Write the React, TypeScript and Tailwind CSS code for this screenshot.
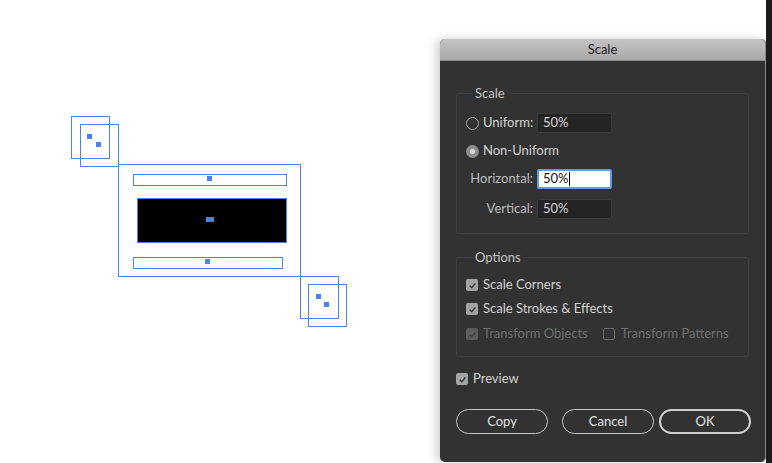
import React from 'react';

const BLUE = '#4d80ff';

const Canvas = () => (
  <svg width={440} height={463} className="block" shapeRendering="crispEdges">
    <g fill="none" stroke={BLUE} strokeWidth={1}>
      <rect x={71.5} y={116.5} width={38} height={42} />
      <rect x={80.5} y={124.5} width={38} height={42} />
      <rect x={118.5} y={164.5} width={182} height={112} />
      <rect x={133.5} y={174.5} width={153} height={11} />
      <rect x={137.5} y={198.5} width={149} height={44} fill="#000" />
      <rect x={133.5} y={257.5} width={149} height={11} />
      <rect x={300.5} y={276.5} width={38} height={42} />
      <rect x={308.5} y={284.5} width={38} height={42} />
    </g>
    <g fill={BLUE}>
      <rect x={87} y={134} width={5} height={5} />
      <rect x={96} y={142} width={5} height={5} />
      <rect x={207} y={176} width={5} height={5} />
      <rect x={206} y={217} width={8} height={5} />
      <rect x={205} y={259} width={5} height={5} />
      <rect x={316} y={294} width={5} height={5} />
      <rect x={324} y={302} width={5} height={5} />
    </g>
  </svg>
);

const Check = ({ checked = true, disabled = false }: { checked?: boolean; disabled?: boolean }) => {
  if (!checked) {
    return <span className="w-[12px] h-[12px] rounded-[2px] border border-[#6b6b6b] shrink-0" />;
  }
  return (
    <span
      className={`w-[12px] h-[12px] rounded-[2px] flex items-center justify-center shrink-0 ${
        disabled ? 'bg-[#5c5c5c]' : 'bg-[#a3a3a3]'
      }`}
    >
      <svg width="9" height="9" viewBox="0 0 10 10">
        <path
          d="M2 5.2 L4.2 7.4 L8.2 2.6"
          fill="none"
          stroke={disabled ? '#3e3e3e' : '#333'}
          strokeWidth="1.6"
        />
      </svg>
    </span>
  );
};

const Radio = ({ checked = false }: { checked?: boolean }) =>
  checked ? (
    <span className="w-[13px] h-[13px] rounded-full bg-[#8e8e8e] flex items-center justify-center shrink-0">
      <span className="w-[5px] h-[5px] rounded-full bg-[#dcdcdc]" />
    </span>
  ) : (
    <span className="w-[13px] h-[13px] rounded-full border border-[#a8a8a8] shrink-0" />
  );

const Field = ({ value, focused = false }: { value: string; focused?: boolean }) =>
  focused ? (
    <div className="w-[75px] h-[20px] bg-white border-2 border-[#5d9cec] rounded-[2px] flex items-center pl-[4px] text-[#111]">
      {value}
      <span className="w-px h-[14px] bg-black" />
    </div>
  ) : (
    <div className="w-[75px] h-[20px] bg-[#242424] border border-[#3a3a3a] rounded-[2px] flex items-center pl-[5px] text-[#d6d6d6]">
      {value}
    </div>
  );

const Button = ({ label, primary = false }: { label: string; primary?: boolean }) => (
  <button
    className={`h-[25px] w-[92px] shrink-0 rounded-full text-[#e2e2e2] text-[13px] ${
      primary ? 'border-2 border-[#cfcfcf]' : 'border border-[#c4c4c4]'
    }`}
  >
    {label}
  </button>
);

export default function App() {
  return (
    <div
      className="w-[772px] h-[463px] bg-white flex overflow-hidden"
      style={{ fontFamily: 'Lato, "Noto Sans", sans-serif' }}
    >
      <div className="w-[440px] shrink-0">
        <Canvas />
      </div>

      <div className="mt-[39px] w-[326px] h-[423px] shrink-0 flex flex-col bg-[#323232] rounded-[5px] border-r border-[#8a8a8a] shadow-[-4px_0_10px_rgba(0,0,0,0.18)] overflow-hidden">
        <div className="h-[22px] shrink-0 bg-gradient-to-b from-[#c4c4c4] to-[#a9a9a9] border-b border-[#8c8c8c] flex items-center justify-center text-[13px] text-[#1e1e1e]">
          Scale
        </div>

        <div className="px-[16px] pt-[24px] text-[13px] text-[#d2d2d2]">
          <fieldset className="border border-[#3e3e3e] rounded-[3px] pl-[9px] pb-[14px]">
            <legend className="ml-[7px] px-[2px] text-[#c4c4c4] leading-[16px]">Scale</legend>
            <div className="mt-[12px] flex items-center h-[20px]">
              <div className="w-[67px] flex items-center gap-[4px]">
                <Radio />
                <span>Uniform:</span>
              </div>
              <div className="ml-[4px]">
                <Field value="50%" />
              </div>
            </div>
            <div className="mt-[8px] flex items-center h-[20px] gap-[4px]">
              <Radio checked />
              <span>Non-Uniform</span>
            </div>
            <div className="mt-[8px] flex items-center h-[20px]">
              <div className="w-[67px] text-right text-[#bcbcbc]">Horizontal:</div>
              <div className="ml-[4px]">
                <Field value="50%" focused />
              </div>
            </div>
            <div className="mt-[10px] flex items-center h-[20px]">
              <div className="w-[67px] text-right text-[#bcbcbc]">Vertical:</div>
              <div className="ml-[4px]">
                <Field value="50%" />
              </div>
            </div>
          </fieldset>

          <fieldset className="mt-[15px] border border-[#3e3e3e] rounded-[3px] pl-[9px] pb-[14px]">
            <legend className="ml-[7px] px-[2px] text-[#c4c4c4] leading-[16px]">Options</legend>
            <div className="mt-[12px] flex items-center h-[16px] gap-[5px]">
              <Check />
              <span>Scale Corners</span>
            </div>
            <div className="mt-[8px] flex items-center h-[16px] gap-[5px]">
              <Check />
              <span>Scale Strokes &amp; Effects</span>
            </div>
            <div className="mt-[9px] flex items-center h-[16px] text-[#6f6f6f]">
              <div className="flex items-center gap-[5px]">
                <Check disabled />
                <span>Transform Objects</span>
              </div>
              <div className="ml-[15px] flex items-center gap-[6px]">
                <Check checked={false} />
                <span>Transform Patterns</span>
              </div>
            </div>
          </fieldset>

          <div className="mt-[14px] flex items-center h-[16px] gap-[5px]">
            <Check />
            <span>Preview</span>
          </div>

          <div className="mt-[22px] -mr-[4px] flex items-center">
            <Button label="Copy" />
            <div className="ml-[14px] shrink-0">
              <Button label="Cancel" />
            </div>
            <div className="ml-[5px] shrink-0">
              <Button label="OK" primary />
            </div>
          </div>
        </div>
      </div>

      <div className="w-[6px] h-full bg-[#1c1c1c] shrink-0" />
    </div>
  );
}
